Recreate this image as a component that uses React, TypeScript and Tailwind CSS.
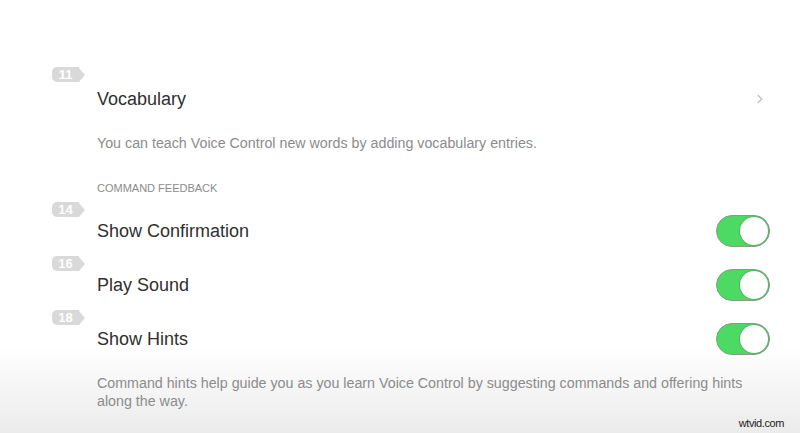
import { ChevronRight } from "lucide-react"

function Badge({ n }: { n: string }) {
  return (
    <div className="flex h-[15px] items-center">
      <div className="flex h-[15px] w-[27px] items-center justify-center rounded-l-[5px] bg-[#d9d9d9] text-[13px] font-bold leading-none text-white">
        {n}
      </div>
      <div className="h-0 w-0 border-y-[7.5px] border-l-[6px] border-y-transparent border-l-[#d9d9d9]" />
    </div>
  )
}

function Toggle() {
  return (
    <div className="flex h-[32px] w-[54px] shrink-0 items-center justify-end rounded-full border border-[#8a9a8a] bg-[#4cd964] p-[1px]">
      <div className="h-[28px] w-[28px] rounded-full bg-white shadow-[0_0_2px_rgba(0,0,0,0.35)]" />
    </div>
  )
}

function ToggleRow({ badge, label }: { badge: string; label: string }) {
  return (
    <div>
      <div className="pl-[52px]">
        <Badge n={badge} />
      </div>
      <div className="flex h-[28px] items-center justify-between pl-[97px] pr-[30px]">
        <span className="text-[18px] text-[#2f2f2f]">{label}</span>
        <Toggle />
      </div>
    </div>
  )
}

export default function App() {
  return (
    <main
      className="relative h-[433px] w-[800px] overflow-hidden bg-gradient-to-b from-white from-80% to-[#ebebeb]"
      style={{ fontFamily: "'Liberation Sans', Arial, sans-serif" }}
    >
      <div className="pt-[67px]">
        {/* Vocabulary */}
        <div className="pl-[52px]">
          <Badge n="11" />
        </div>
        <div className="flex h-[34px] items-center justify-between pl-[97px] pr-[33px]">
          <span className="text-[18px] text-[#2f2f2f]">Vocabulary</span>
          <ChevronRight className="size-[14px] text-[#c4c4c4]" strokeWidth={2.5} />
        </div>
        <p className="mt-[19px] pl-[97px] text-[14.25px] leading-[16px] text-[#8c8c8c]">
          You can teach Voice Control new words by adding vocabulary entries.
        </p>

        {/* Command feedback */}
        <p className="mt-[29px] pl-[97px] text-[11px] leading-[16px] text-[#8c8c8c]">
          COMMAND FEEDBACK
        </p>
        <div className="mt-[6px] flex flex-col gap-[11px]">
          <ToggleRow badge="14" label="Show Confirmation" />
          <ToggleRow badge="16" label="Play Sound" />
          <ToggleRow badge="18" label="Show Hints" />
        </div>
        <p className="mt-[21px] w-[765px] pl-[97px] text-[14.25px] leading-[18px] text-[#8c8c8c]">
          Command hints help guide you as you learn Voice Control by suggesting commands and offering hints
          along the way.
        </p>
      </div>

      <span className="absolute bottom-[2px] right-[16px] text-[11px] tracking-[-0.4px] text-[#222]">
        wtvid.com
      </span>
    </main>
  )
}
